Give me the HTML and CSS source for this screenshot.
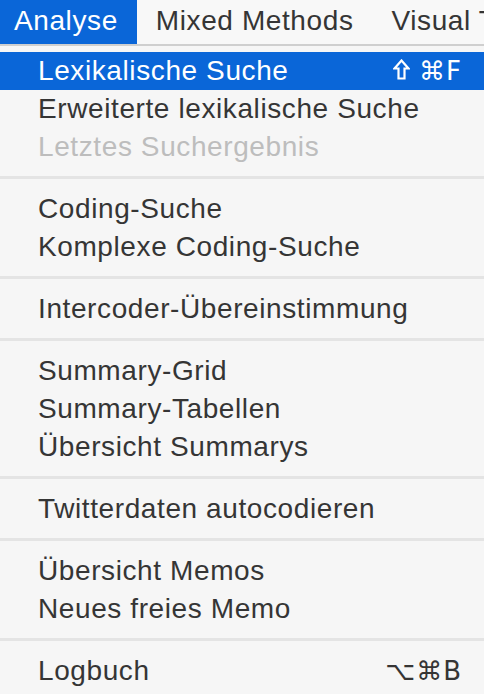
FILE: index.html
```html
<!doctype html>
<html>
  <head>
    <meta charset=utf-8>
    <title>Analyse</title>
    <link rel="stylesheet" href="styles.css">
  </head>
  <body>
    <div class="menubar">
      <span class="top active first">Analyse</span>
      <span class="top">Mixed Methods</span>
      <span class="top">Visual Tools</span>
    </div>

    <ul class="menu">
      <li class="item selected">
        <span>Lexikalische Suche</span>
        <span class="key">
          <svg class="shift" width="17" height="21" viewBox="0 0 17 21"><path d="M8.5 1.5 L15.5 9.5 L11.5 9.5 L11.5 19.5 L5.5 19.5 L5.5 9.5 L1.5 9.5 Z" fill="none" stroke="currentColor" stroke-width="2.2" stroke-linejoin="miter"/></svg>&#8984;F
        </span>
      </li>
      <li class="item"><span>Erweiterte lexikalische Suche</span></li>
      <li class="item disabled"><span>Letztes Suchergebnis</span></li>
      <li class="sep"></li>
      <li class="item"><span>Coding-Suche</span></li>
      <li class="item"><span>Komplexe Coding-Suche</span></li>
      <li class="sep"></li>
      <li class="item"><span>Intercoder-Übereinstimmung</span></li>
      <li class="sep"></li>
      <li class="item"><span>Summary-Grid</span></li>
      <li class="item"><span>Summary-Tabellen</span></li>
      <li class="item"><span>Übersicht Summarys</span></li>
      <li class="sep"></li>
      <li class="item"><span>Twitterdaten autocodieren</span></li>
      <li class="sep"></li>
      <li class="item"><span>Übersicht Memos</span></li>
      <li class="item"><span>Neues freies Memo</span></li>
      <li class="sep"></li>
      <li class="item"><span>Logbuch</span><span class="key">&#8997;&#8984;B</span></li>
    </ul>
  </body>
</html>
```

FILE: styles.css
```css
*{
  box-sizing:border-box;
}
body{
  margin:0;
  background:#f6f6f6;
  font-family:"Liberation Sans", Arial, sans-serif;
  font-size:28px;
  letter-spacing:0.6px;
  color:#353535;
  overflow:hidden;
}

.menubar{
  display:flex;
  height:46px;
  background:#f8f8f8;
  border-bottom:2px solid #cfcfcf;
  white-space:nowrap;
  overflow:hidden;
}
.top{
  display:flex;
  align-items:center;
  height:44px;
  padding:0 19px 2px;
}
.top.first{
  padding-left:14px;
}
.top.active{
  background:#0a66d8;
  color:#fff;
}

.menu{
  list-style:none;
  margin:0;
  padding:6px 0 0;
}
.item{
  display:flex;
  justify-content:space-between;
  align-items:center;
  height:38px;
  padding:0 22px 1px 38px;
}
.item.selected{
  background:#0a66d8;
  color:#fff;
}
.item.disabled{
  color:#bdbdbd;
}
.key{
  display:flex;
  align-items:center;
  font-family:"DejaVu Sans", sans-serif;
  font-size:26px;
  letter-spacing:1px;
}
.shift{
  margin-right:9px;
  margin-top:-2px;
}
.sep{
  height:3px;
  margin:10px 0 11px;
  background:#e4e4e4;
}
```
